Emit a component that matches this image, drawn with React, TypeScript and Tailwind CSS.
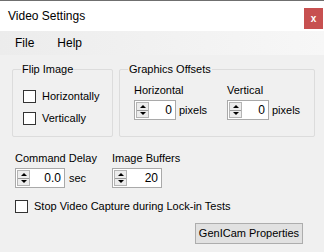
import React from "react";

const font = { fontFamily: '"Liberation Sans", Arial, sans-serif' };

function CheckBox({ label }: { label: string }) {
  return (
    <div className="flex items-center">
      <div className="w-[13px] h-[13px] border border-[#333333] bg-white" />
      <span className="ml-[6px] text-[11px] leading-[13px] text-black">{label}</span>
    </div>
  );
}

function Spinner({ value, width }: { value: string; width: number }) {
  return (
    <div
      className="flex h-[20px] border border-[#a9a9a9] bg-white"
      style={{ width }}
    >
      <div className="flex flex-col w-[13px] m-[1px] border border-[#b4b4b4] bg-[#ececec]">
        <div className="flex-1 flex items-center justify-center border-b border-[#9a9a9a]">
          <div className="w-0 h-0 border-l-[3px] border-r-[3px] border-b-[3px] border-l-transparent border-r-transparent border-b-black" />
        </div>
        <div className="flex-1 flex items-center justify-center">
          <div className="w-0 h-0 border-l-[3px] border-r-[3px] border-t-[3px] border-l-transparent border-r-transparent border-t-black" />
        </div>
      </div>
      <div className="flex-1 flex items-center justify-end pr-[3px] text-[12px] text-black">
        {value}
      </div>
    </div>
  );
}

function Group({
  title,
  className,
  children,
}: {
  title: string;
  className: string;
  children: React.ReactNode;
}) {
  return (
    <div className={"relative border border-[#dcdcdc] rounded-[2px] " + className}>
      <span className="absolute left-[8px] top-[-8px] px-[1px] bg-[#f0f0f0] text-[11px] leading-[14px] text-black">
        {title}
      </span>
      {children}
    </div>
  );
}

export default function App() {
  return (
    <div className="w-[324px] h-[252px] flex flex-col bg-[#f0f0f0] overflow-hidden" style={font}>
      <div className="h-[1px] bg-[#6f6f6f]" />
      <div className="h-[30px] bg-white flex justify-between">
        <span className="ml-[8px] mt-[8px] text-[12px] leading-[14px] text-black">Video Settings</span>
        <div className="mt-[7px] mr-[1px] w-[19px] h-[21px] bg-[#c75050] flex items-center justify-center text-white text-[10px] font-bold leading-none">
          x
        </div>
      </div>
      <div className="h-[24px] flex items-center bg-gradient-to-r from-[#ececec] to-[#f7f7f7] text-[12px] text-black">
        <span className="ml-[15px]">File</span>
        <span className="ml-[23px]">Help</span>
      </div>
      <div className="flex mt-[14px] ml-[12px] gap-[6px]">
        <Group title="Flip Image" className="w-[101px] h-[68px]">
          <div className="flex flex-col gap-[9px] mt-[20px] ml-[10px]">
            <CheckBox label="Horizontally" />
            <CheckBox label="Vertically" />
          </div>
        </Group>
        <Group title="Graphics Offsets" className="w-[196px] h-[68px]">
          <div className="flex mt-[13px] ml-[14px]">
            <div className="flex flex-col w-[93px]">
              <span className="text-[11px] leading-[14px] text-black">Horizontal</span>
              <div className="flex items-center mt-[3px]">
                <Spinner value="0" width={42} />
                <span className="ml-[3px] text-[11px] text-black">pixels</span>
              </div>
            </div>
            <div className="flex flex-col">
              <span className="text-[11px] leading-[14px] text-black">Vertical</span>
              <div className="flex items-center mt-[3px]">
                <Spinner value="0" width={42} />
                <span className="ml-[3px] text-[11px] text-black">pixels</span>
              </div>
            </div>
          </div>
        </Group>
      </div>
      <div className="flex mt-[14px] ml-[15px]">
        <div className="flex flex-col w-[97px]">
          <span className="text-[11px] leading-[14px] text-black">Command Delay</span>
          <div className="flex items-center mt-[3px]">
            <Spinner value="0.0" width={50} />
            <span className="ml-[4px] text-[11px] text-black">sec</span>
          </div>
        </div>
        <div className="flex flex-col">
          <span className="text-[11px] leading-[14px] text-black">Image Buffers</span>
          <div className="flex items-center mt-[3px]">
            <Spinner value="20" width={50} />
          </div>
        </div>
      </div>
      <div className="mt-[12px] ml-[15px]">
        <CheckBox label="Stop Video Capture during Lock-in Tests" />
      </div>
      <div className="flex justify-end mt-[10px] mr-[21px]">
        <div className="w-[108px] h-[21px] border border-[#adadad] bg-[#e1e1e1] flex items-center justify-center text-[11px] text-black">
          GenICam Properties
        </div>
      </div>
    </div>
  );
}
